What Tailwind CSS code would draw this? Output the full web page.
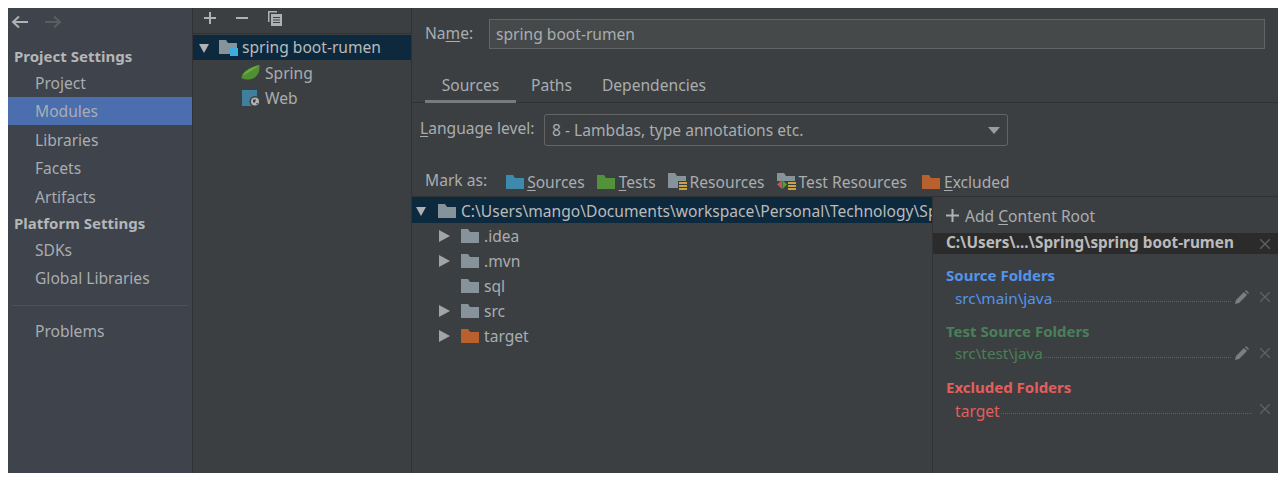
<!DOCTYPE html>
<html lang="en">
<head>
    <meta charset="UTF-8">
    <title>Project Structure - Modules</title>
    <script src="https://cdn.jsdelivr.net/npm/@tailwindcss/browser@4"></script>
</head>
<body class="bg-white p-2 font-['Noto_Sans',sans-serif] text-[15.6px] leading-[25px] text-[#a9adb0]">
<div class="flex h-[465px] w-[1270px] overflow-hidden bg-[#3c3f41]">

    <!-- settings sidebar -->
    <aside class="w-[184px] shrink-0 bg-[#3e434c]">
        <div class="flex h-[27px] items-center gap-[15px] pl-[3px]">
            <svg width="18" height="14" viewBox="0 0 18 14" fill="none" stroke="#afb1b3" stroke-width="2"><path d="M17 7H2M8 1.500 2 7l6 5.500"/></svg>
            <svg width="18" height="14" viewBox="0 0 18 14" fill="none" stroke="#5a5e63" stroke-width="2"><path d="M1 7h15M10 1.500 16 7l-6 5.500"/></svg>
        </div>
        <div class="flex h-[28px] items-center pl-[6px] pt-[14px] text-[15px] font-bold text-[#b4b6b8]">Project Settings</div>
        <div class="mt-[6px] flex h-[28px] items-center pl-[27px]">Project</div>
        <div class="flex h-[28px] items-center bg-[#4b6eaf] pl-[27px]">Modules</div>
        <div class="mt-[1px] flex h-[28px] items-center pl-[27px]">Libraries</div>
        <div class="flex h-[28px] items-center pl-[27px]">Facets</div>
        <div class="flex h-[29px] items-center pl-[27px] pt-[1px]">Artifacts</div>
        <div class="flex h-[26px] items-center pb-[2px] pl-[6px] text-[15px] font-bold text-[#b4b6b8]">Platform Settings</div>
        <div class="flex h-[27px] items-center pl-[27px]">SDKs</div>
        <div class="flex h-[28px] items-center pl-[27px]">Global Libraries</div>
        <div class="mx-[4px] mt-[13px] h-px bg-[#4c5059]"></div>
        <div class="mt-[12px] flex h-[28px] items-center pb-[2px] pl-[27px]">Problems</div>
    </aside>

    <!-- module tree -->
    <section class="w-[220px] shrink-0 border-x border-[#323232]">
        <div class="flex h-[26px] items-center gap-[18px] border-b border-[#323232] pb-[5px] pl-[10px]">
            <svg width="14" height="14" viewBox="0 0 14 14" fill="none" stroke="#afb1b3" stroke-width="2"><path d="M7 1v12M1 7h12"/></svg>
            <svg width="14" height="14" viewBox="0 0 14 14" fill="none" stroke="#afb1b3" stroke-width="2"><path d="M1 7h12"/></svg>
            <svg width="16" height="17" viewBox="0 0 16 17" fill="#afb1b3"><path d="M1 1h9v1.500H2.500V12H1z"/><path d="M4 4h11v12H4z"/><path fill="#3c3f41" d="M6 7h7v1H6zM6 9.500h7v1H6zM6 12h7v1H6z"/></svg>
        </div>
        <div class="mt-px flex h-[25px] items-center bg-[#0d293e] pl-[5px] text-[#bbbbbb]">
            <svg class="mr-[9px] shrink-0" width="12" height="12" viewBox="0 0 12 12" fill="#afb1b3"><path d="M1 2h10L6 11z"/></svg>
            <svg class="mr-[4px] shrink-0" width="19" height="17" viewBox="0 0 19 17"><path fill="#87939a" d="M0 1h7l2 3h9v11H0z"/><path fill="#3dade0" d="M11 9h8v8h-8z"/></svg>
            <span>spring boot-rumen</span>
        </div>
        <div class="flex h-[25px] items-center pl-[48px]">
            <svg class="mr-[5px] shrink-0" width="19" height="15" viewBox="0 0 19 15"><path fill="#4f8f32" d="M18.500 0c.5 6-1.500 12-8 14-4 1-8 .5-10-1C1 7 7 3 18.500 0z"/><path fill="#69ad45" d="M18.500 0C12 1.500 5 5 1.500 11 8 7 13 5 18.500 0z"/></svg>
            <span class="pt-[2px]">Spring</span>
        </div>
        <div class="flex h-[25px] items-center pl-[49px]">
            <svg class="mr-[4px] shrink-0" width="19" height="18" viewBox="0 0 19 18"><path fill="#40809f" d="M0 1h15v16H0z"/><circle cx="13" cy="12.500" r="5.500" fill="#3c3f41"/><circle cx="13" cy="12.500" r="4" fill="#afb1b3"/><path fill="#3c3f41" d="M11 10.500h3l-1 3h-2zM14 14h2l-1 2z"/></svg>
            <span class="pt-[2px]">Web</span>
        </div>
    </section>

    <!-- module settings -->
    <main class="min-w-0 flex-1">
        <div class="mt-[11px] flex h-[30px] items-center pl-[13px]">
            <span class="w-[64px] shrink-0 pb-[2px]">Na<span class="underline underline-offset-2">m</span>e:</span>
            <div class="flex h-[30px] w-[776px] items-center border border-[#646464] bg-[#45494a] pl-[6px]">spring boot-rumen</div>
        </div>
        <div class="mt-[11px] flex h-[43px] items-end border-b border-[#323232] pl-[13px]">
            <div class="-mb-px flex h-[33px] w-[91px] shrink-0 items-center justify-center border-b-[3px] border-[#787b7d] pt-[1px]">Sources</div>
            <div class="flex h-[33px] items-center pb-[1px] pl-[15px]">Paths</div>
            <div class="flex h-[33px] items-center pb-[1px] pl-[30px]">Dependencies</div>
        </div>
        <div class="mt-[11px] flex h-[32px] items-center pl-[8px]">
            <span class="w-[124px] shrink-0 pb-[4px]"><span class="underline underline-offset-2">L</span>anguage level:</span>
            <div class="flex h-[32px] w-[464px] items-center justify-between rounded-[3px] border border-[#646464] pl-[7px] pr-[7px]">
                8 - Lambdas, type annotations etc.
                <svg width="12" height="8" viewBox="0 0 12 8" fill="#9a9da0"><path d="M0 1h12L6 8z"/></svg>
            </div>
        </div>
        <div class="mt-[22px] flex h-[29px] items-center whitespace-nowrap border-b border-[#323232] pl-[13px]">
            <span class="mr-[19px] pb-[4px]">Mark as:</span>
            <svg class="mr-[3px] shrink-0" width="18" height="14" viewBox="0 0 18 14"><path fill="#3d8aad" d="M0 0h7l2 3h9v11H0z"/></svg>
            <span class="mr-[12px]"><span class="underline underline-offset-2">S</span>ources</span>
            <svg class="mr-[4px] shrink-0" width="18" height="14" viewBox="0 0 18 14"><path fill="#54913b" d="M0 0h7l2 3h9v11H0z"/></svg>
            <span class="mr-[12px]"><span class="underline underline-offset-2">T</span>ests</span>
            <svg class="mr-[2px] shrink-0" width="20" height="18" viewBox="0 0 20 18"><path fill="#87939a" d="M0 0h7l2 3h9v12H0z"/><path fill="#3c3f41" d="M10 8h10v10H10z"/><path fill="#c9a33f" d="M11 9h8v2h-8zM11 12h8v2h-8zM11 15h8v2h-8z"/></svg>
            <span class="mr-[12px]">Resources</span>
            <svg class="mr-[3px] shrink-0" width="19" height="18" viewBox="0 0 19 18"><path fill="#87939a" d="M0 0h7l2 3h9v12H0z"/><path fill="#3c3f41" d="M0 8h19v10H0z"/><path fill="#c9a33f" d="M11 9h8v2h-8zM11 12h8v2h-8zM11 15h8v2h-8z"/><path fill="#c75450" d="M5 7v9L0 11.500z"/><path fill="#54a03b" d="M5.500 7v9l4.500-4.500z"/></svg>
            <span class="mr-[15px]">Test Resources</span>
            <svg class="mr-[4px] shrink-0" width="18" height="14" viewBox="0 0 18 14"><path fill="#b9602f" d="M0 0h7l2 3h9v11H0z"/></svg>
            <span><span class="underline underline-offset-2">E</span>xcluded</span>
        </div>
        <div class="flex h-[276px]">
            <!-- content tree -->
            <div class="w-[520px] shrink-0 overflow-hidden">
                <div class="flex h-[26px] items-center overflow-hidden whitespace-nowrap bg-[#0d293e] pl-[3px] pt-[2px] text-[#bbbbbb]">
                    <svg class="mr-[11px] shrink-0" width="12" height="12" viewBox="0 0 12 12" fill="#afb1b3"><path d="M1 2h10L6 11z"/></svg>
                    <svg class="mr-[5px] shrink-0" width="18" height="14" viewBox="0 0 18 14"><path fill="#87939a" d="M0 0h7l2 3h9v11H0z"/></svg>
                    <span class="w-[471px] shrink-0 overflow-hidden">C:\Users\mango\Documents\workspace\Personal\Technology\Spring</span>
                </div>
                <div class="flex h-[25px] items-center pl-[27px] pt-px">
                    <svg class="mr-[11px] shrink-0" width="11" height="12" viewBox="0 0 11 12" fill="#a2a4a6"><path d="M0 0l11 6-11 6z"/></svg>
                    <svg class="mr-[5px] shrink-0" width="18" height="14" viewBox="0 0 18 14"><path fill="#87939a" d="M0 0h7l2 3h9v11H0z"/></svg>
                    .idea
                </div>
                <div class="flex h-[25px] items-center pl-[27px] pt-px">
                    <svg class="mr-[11px] shrink-0" width="11" height="12" viewBox="0 0 11 12" fill="#a2a4a6"><path d="M0 0l11 6-11 6z"/></svg>
                    <svg class="mr-[5px] shrink-0" width="18" height="14" viewBox="0 0 18 14"><path fill="#87939a" d="M0 0h7l2 3h9v11H0z"/></svg>
                    .mvn
                </div>
                <div class="flex h-[25px] items-center pl-[49px] pt-px">
                    <svg class="mr-[5px] shrink-0" width="18" height="14" viewBox="0 0 18 14"><path fill="#87939a" d="M0 0h7l2 3h9v11H0z"/></svg>
                    sql
                </div>
                <div class="flex h-[25px] items-center pl-[27px] pt-px">
                    <svg class="mr-[11px] shrink-0" width="11" height="12" viewBox="0 0 11 12" fill="#a2a4a6"><path d="M0 0l11 6-11 6z"/></svg>
                    <svg class="mr-[5px] shrink-0" width="18" height="14" viewBox="0 0 18 14"><path fill="#87939a" d="M0 0h7l2 3h9v11H0z"/></svg>
                    src
                </div>
                <div class="flex h-[25px] items-center pl-[27px] pt-px">
                    <svg class="mr-[11px] shrink-0" width="11" height="12" viewBox="0 0 11 12" fill="#a2a4a6"><path d="M0 0l11 6-11 6z"/></svg>
                    <svg class="mr-[5px] shrink-0" width="18" height="14" viewBox="0 0 18 14"><path fill="#b9602f" d="M0 0h7l2 3h9v11H0z"/></svg>
                    target
                </div>
            </div>
            <!-- content roots -->
            <div class="flex-1 border-l border-[#323232]">
                <div class="flex h-[36px] items-center whitespace-pre pl-[13px] pt-[1px]">
                    <svg class="mr-[6px] shrink-0" width="13" height="13" viewBox="0 0 13 13" fill="none" stroke="#afb1b3" stroke-width="2"><path d="M6.500 0v13M0 6.500h13"/></svg>
                    <span class="pt-[2px]">Add <span class="underline underline-offset-2">C</span>ontent Root</span>
                </div>
                <div class="flex h-[21px] items-center justify-between bg-[#2b2b2b] pl-[13px] pr-[8px] text-[15.3px] font-bold text-[#bbbbbb]">
                    <span class="pb-[2px]">C:\Users\...\Spring\spring boot-rumen</span>
                    <svg width="10" height="10" viewBox="0 0 10 10" fill="none" stroke="#5f6163" stroke-width="1.300"><path d="M0 0l10 10M10 0 0 10"/></svg>
                </div>
                <div class="mt-[9px] flex h-[22px] items-center pl-[13px] pt-[2px] text-[15px] font-bold text-[#5394ec]">Source Folders</div>
                <div class="flex h-[24px] items-center pl-[22px] pr-[8px] text-[15.3px] text-[#5394ec]">
                    <span class="pt-[2px]">src\main\java</span>
                    <span class="mx-[1px] mt-[8px] flex-1 border-b border-dotted border-[#5f6163]"></span>
                    <svg class="ml-[3px] mr-[11px] shrink-0" width="14" height="14" viewBox="0 0 14 14" fill="#7c7f81"><path d="M0 14l1-4 8-8 3 3-8 8zM10 1l1-1 3 3-1 1z"/></svg>
                    <svg class="shrink-0" width="10" height="10" viewBox="0 0 10 10" fill="none" stroke="#5f6163" stroke-width="1.300"><path d="M0 0l10 10M10 0 0 10"/></svg>
                </div>
                <div class="mt-[10px] flex h-[22px] items-center pl-[13px] pt-[2px] text-[15px] font-bold text-[#4a8059]">Test Source Folders</div>
                <div class="flex h-[24px] items-center pl-[22px] pr-[8px] text-[15.3px] text-[#4a8059]">
                    <span>src\test\java</span>
                    <span class="mx-[1px] mt-[8px] flex-1 border-b border-dotted border-[#5f6163]"></span>
                    <svg class="ml-[3px] mr-[11px] shrink-0" width="14" height="14" viewBox="0 0 14 14" fill="#7c7f81"><path d="M0 14l1-4 8-8 3 3-8 8zM10 1l1-1 3 3-1 1z"/></svg>
                    <svg class="shrink-0" width="10" height="10" viewBox="0 0 10 10" fill="none" stroke="#5f6163" stroke-width="1.300"><path d="M0 0l10 10M10 0 0 10"/></svg>
                </div>
                <div class="mt-[10px] flex h-[22px] items-center pl-[13px] pt-[2px] text-[15px] font-bold text-[#e35e5c]">Excluded Folders</div>
                <div class="flex h-[24px] items-center pl-[22px] pr-[8px] text-[#e35e5c]">
                    <span class="pt-[5px]">target</span>
                    <span class="mx-[1px] mt-[8px] flex-1 border-b border-dotted border-[#5f6163]"></span>
                    <svg class="ml-[7px] shrink-0" width="10" height="10" viewBox="0 0 10 10" fill="none" stroke="#5f6163" stroke-width="1.300"><path d="M0 0l10 10M10 0 0 10"/></svg>
                </div>
            </div>
        </div>
    </main>
</div>
</body>
</html>
